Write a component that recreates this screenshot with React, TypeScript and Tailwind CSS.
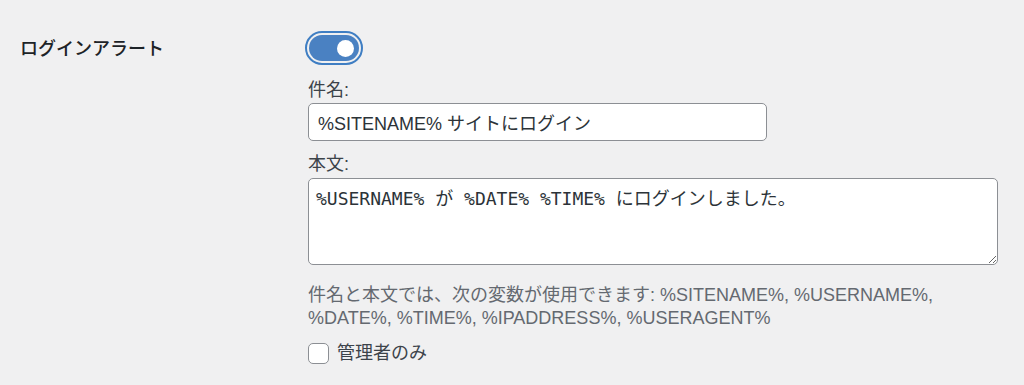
import { useState } from 'react';

const font = '"Liberation Sans", "Noto Sans CJK JP", sans-serif';

export default function App() {
  const [enabled, setEnabled] = useState(true);
  const [subject, setSubject] = useState('%SITENAME% サイトにログイン');
  const [body, setBody] = useState('%USERNAME% が %DATE% %TIME% にログインしました。');
  const [adminOnly, setAdminOnly] = useState(false);

  return (
    <div className="min-h-[385px] bg-[#f0f0f1] text-[#1d2327]" style={{ fontFamily: font }}>
      <div className="flex pt-[31px]">
        <div className="w-[308px] shrink-0 pl-[20px]">
          <div className="flex h-[36px] items-center text-[18px] font-medium leading-none">ログインアラート</div>
        </div>

        <div className="flex flex-col">
          <button
            onClick={() => setEnabled(!enabled)}
            className="ml-[-3px] flex h-[34px] w-[58px] items-center rounded-full border-2 border-[#3f7ec3] p-[2px]"
          >
            <span
              className={`flex h-full w-full items-center rounded-full px-[5px] ${
                enabled ? 'justify-end bg-[#4a81c2]' : 'justify-start bg-[#8c8f94]'
              }`}
            >
              <span className="h-[17px] w-[17px] rounded-full bg-white" />
            </span>
          </button>

          <label className="mt-[13px] text-[18px] leading-[24px] text-[#3c434a]">件名:</label>
          <input
            value={subject}
            onChange={(e) => setSubject(e.target.value)}
            className="mt-[1px] h-[38px] w-[459px] rounded-[5px] border border-[#8c8f94] bg-white px-[9px] text-[18px] text-[#2c3338] outline-none"
            style={{ fontFamily: font }}
          />

          <label className="mt-[11px] text-[18px] leading-[24px] text-[#3c434a]">本文:</label>
          <textarea
            value={body}
            onChange={(e) => setBody(e.target.value)}
            className="mt-[2px] block h-[87px] w-[690px] rounded-[5px] border border-[#8c8f94] bg-white px-[7px] py-[8px] text-[18px] leading-[24px] text-[#2c3338] outline-none"
            style={{ fontFamily: '"DejaVu Sans Mono", "Noto Sans CJK JP", monospace' }}
          />

          <p className="mt-[19px] w-[660px] text-[18px] leading-[23px] text-[#646970]">
            件名と本文では、次の変数が使用できます: %SITENAME%, %USERNAME%, %DATE%, %TIME%, %IPADDRESS%, %USERAGENT%
          </p>

          <label className="mt-[11px] flex items-center gap-[8px] text-[18px] leading-[24px] text-[#3c434a]">
            <input
              type="checkbox"
              checked={adminOnly}
              onChange={(e) => setAdminOnly(e.target.checked)}
              className="h-[21px] w-[21px] appearance-none rounded-[5px] border border-[#8c8f94] bg-white checked:bg-[#2271b1]"
            />
            <span>管理者のみ</span>
          </label>
        </div>
      </div>
    </div>
  );
}
